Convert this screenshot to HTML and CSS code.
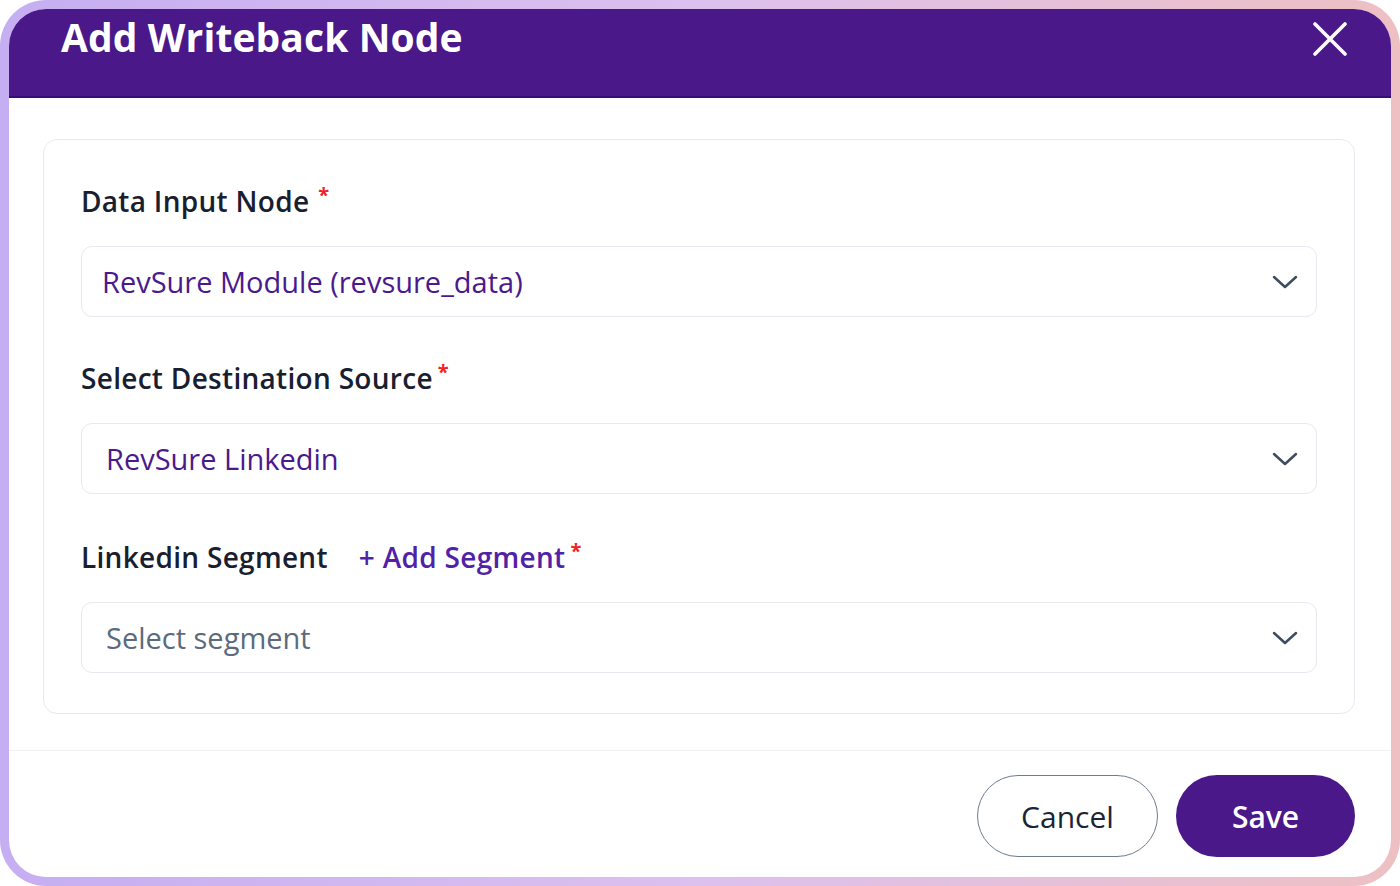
FILE: index.html
```html
<!DOCTYPE html>
<html lang="en">
<head>
<meta charset="utf-8">
<title>Add Writeback Node</title>
<link rel="stylesheet" href="styles.css">
</head>
<body>
<div class="modal">
  <div class="modal-inner">
    <header class="modal-header">
      <h1 class="modal-title">Add Writeback Node</h1>
      <button class="close-btn" aria-label="Close">
        <svg width="34" height="34" viewBox="0 0 34 34"><path d="M2 2 L32 32 M32 2 L2 32" stroke="#fff" stroke-width="3.6" stroke-linecap="round"/></svg>
      </button>
    </header>
    <main class="modal-body">
      <section class="card">
        <div class="field">
          <div class="label">Data Input Node<span class="req req-spaced">*</span></div>
          <div class="select select-a">
            <span class="value">RevSure Module (revsure_data)</span>
            <svg class="chev" width="26" height="14" viewBox="0 0 26 14"><path d="M2 2 L13 12 L24 2" fill="none" stroke="#3d4c5e" stroke-width="2.5" stroke-linecap="round" stroke-linejoin="round"/></svg>
          </div>
        </div>
        <div class="field">
          <div class="label">Select Destination Source<span class="req">*</span></div>
          <div class="select">
            <span class="value">RevSure Linkedin</span>
            <svg class="chev" width="26" height="14" viewBox="0 0 26 14"><path d="M2 2 L13 12 L24 2" fill="none" stroke="#3d4c5e" stroke-width="2.5" stroke-linecap="round" stroke-linejoin="round"/></svg>
          </div>
        </div>
        <div class="field field-last">
          <div class="label">Linkedin Segment<a class="add-link">+ Add Segment</a><span class="req">*</span></div>
          <div class="select">
            <span class="placeholder">Select segment</span>
            <svg class="chev" width="26" height="14" viewBox="0 0 26 14"><path d="M2 2 L13 12 L24 2" fill="none" stroke="#3d4c5e" stroke-width="2.5" stroke-linecap="round" stroke-linejoin="round"/></svg>
          </div>
        </div>
      </section>
    </main>
    <footer class="modal-footer">
      <button class="btn btn-cancel">Cancel</button>
      <button class="btn btn-save">Save</button>
    </footer>
  </div>
</div>
</body>
</html>
```

FILE: styles.css
```css
* { box-sizing: border-box; }
html, body { margin: 0; padding: 0; background: #ffffff; }
body {
  font-family: "Open Sans", Lato, "Liberation Sans", sans-serif;
  width: 1400px;
  height: 886px;
  overflow: hidden;
}
.modal {
  width: 1400px;
  height: 886px;
  padding: 9px 9px 9px 9px;
  border-radius: 46px;
  background: linear-gradient(90deg, #c5aef2 0%, #dcc0ee 50%, #eec0c4 100%);
}
.modal-inner {
  height: 100%;
  background: #ffffff;
  border-radius: 37px;
  overflow: hidden;
  display: flex;
  flex-direction: column;
}
.modal-header {
  height: 89px;
  flex: none;
  background: #4a1888;
  border-bottom: 2px solid #3a0a7c;
  display: flex;
  justify-content: space-between;
  align-items: flex-start;
  padding: 0 44px 0 52px;
}
.modal-title {
  margin: 0;
  font-size: 39px;
  font-weight: 700;
  line-height: 56px;
  color: #ffffff;
  letter-spacing: 0.1px;
}
.close-btn {
  margin-top: 13px;
  background: none;
  border: none;
  padding: 0;
  width: 34px;
  height: 34px;
}
.modal-body {
  padding: 41px 36px 36px 34px;
  border-bottom: 1px solid #eff0f3;
}
.card {
  border: 1.5px solid #e6e9ef;
  border-radius: 14px;
  padding: 43px 37px 40px 37px;
  display: flex;
  flex-direction: column;
  gap: 43px;
}
.field {
  display: flex;
  flex-direction: column;
  gap: 27px;
}
.field-last { margin-top: 2px; }
.label {
  font-size: 28px;
  font-weight: 600;
  line-height: 36px;
  color: #18202f;
  display: flex;
  align-items: baseline;
  letter-spacing: 0.3px;
}
.req {
  color: #f2222b;
  font-size: 20px;
  font-weight: 700;
  align-self: flex-start;
  line-height: 24px;
  margin-left: 5px;
}
.req-spaced { margin-left: 9px; }
.add-link {
  color: #5222a6;
  margin-left: 31px;
  font-weight: 600;
}
.select {
  height: 71px;
  border: 1.5px solid #e6e9ef;
  border-radius: 11px;
  display: flex;
  align-items: center;
  justify-content: space-between;
  padding: 0 18px 0 24px;
}
.select-a { padding-left: 20px; }
.value {
  font-size: 29px;
  color: #4a1a8c;
}
.placeholder {
  font-size: 29px;
  color: #5b6b7d;
}
.chev { flex: none; }
.modal-footer {
  flex: 1;
  display: flex;
  justify-content: flex-end;
  align-items: flex-start;
  gap: 18px;
  padding: 24px 36px 0 0;
}
.btn {
  height: 82px;
  border-radius: 41px;
  font-family: "Open Sans", Lato, "Liberation Sans", sans-serif;
  font-size: 30px;
  cursor: pointer;
}
.btn-cancel {
  width: 181px;
  background: #ffffff;
  border: 1.6px solid #6c7d8e;
  color: #1b2434;
}
.btn-save {
  width: 179px;
  background: #4a1888;
  border: none;
  color: #ffffff;
  font-weight: 600;
}
```
